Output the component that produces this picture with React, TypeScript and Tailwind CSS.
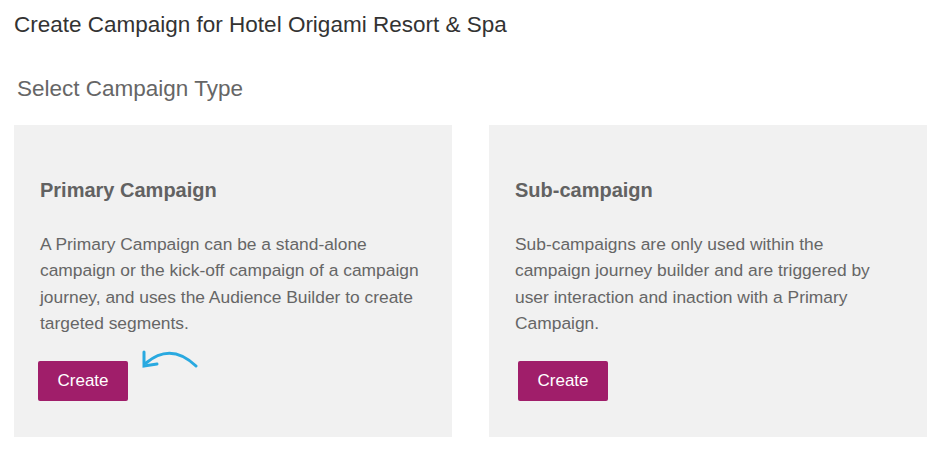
import React from "react";

function CurvedArrow() {
  return (
    <svg width="60" height="20" viewBox="0 0 60 20" className="-mt-[12px] ml-[12px] shrink-0" fill="none">
      <path d="M6 14 Q31 -7 56 17" stroke="#29a9e0" strokeWidth="3" strokeLinecap="round" />
      <path d="M4 3 L4 17 L17 15" stroke="#29a9e0" strokeWidth="3" strokeLinecap="round" strokeLinejoin="miter" />
    </svg>
  );
}

function TypeCard({
  title,
  lines,
  buttonOffset,
  arrow,
}: {
  title: string;
  lines: string[];
  buttonOffset: string;
  arrow?: boolean;
}) {
  return (
    <div className="bg-[#f1f1f1] w-[438px] h-[312px] px-[26px] pt-[54px]">
      <h3 className="text-[20px] leading-[22px] font-bold text-[#626262]">{title}</h3>
      <p className="mt-[30px] text-[17.4px] leading-[26.4px] text-[#666666] whitespace-nowrap">
        {lines.map((line, i) => (
          <React.Fragment key={i}>
            {line}
            {i < lines.length - 1 && <br />}
          </React.Fragment>
        ))}
      </p>
      <div className={`flex items-start mt-[24px] ${buttonOffset}`}>
        <button className="w-[90px] h-[40px] rounded-[2px] bg-[#a01e6a] text-white text-[17px] leading-[40px] font-['Liberation_Sans',Arial,sans-serif]">
          Create
        </button>
        {arrow && <CurvedArrow />}
      </div>
    </div>
  );
}

export default function App() {
  return (
    <div className="w-[941px] h-[453px] bg-white pl-[14px] font-['Liberation_Sans',Arial,sans-serif]">
      <h1 className="pt-[12px] text-[22.5px] leading-[26px] text-[#333333]">
        Create Campaign for Hotel Origami Resort &amp; Spa
      </h1>
      <h2 className="mt-[38px] ml-[3px] text-[22.5px] leading-[26px] text-[#666666]">Select Campaign Type</h2>
      <div className="flex gap-[37px] mt-[23px]">
        <TypeCard
          title="Primary Campaign"
          lines={[
            "A Primary Campaign can be a stand-alone",
            "campaign or the kick-off campaign of a campaign",
            "journey, and uses the Audience Builder to create",
            "targeted segments.",
          ]}
          buttonOffset="-ml-[2px]"
          arrow
        />
        <TypeCard
          title="Sub-campaign"
          lines={[
            "Sub-campaigns are only used within the",
            "campaign journey builder and are triggered by",
            "user interaction and inaction with a Primary",
            "Campaign.",
          ]}
          buttonOffset="ml-[3px]"
        />
      </div>
    </div>
  );
}
